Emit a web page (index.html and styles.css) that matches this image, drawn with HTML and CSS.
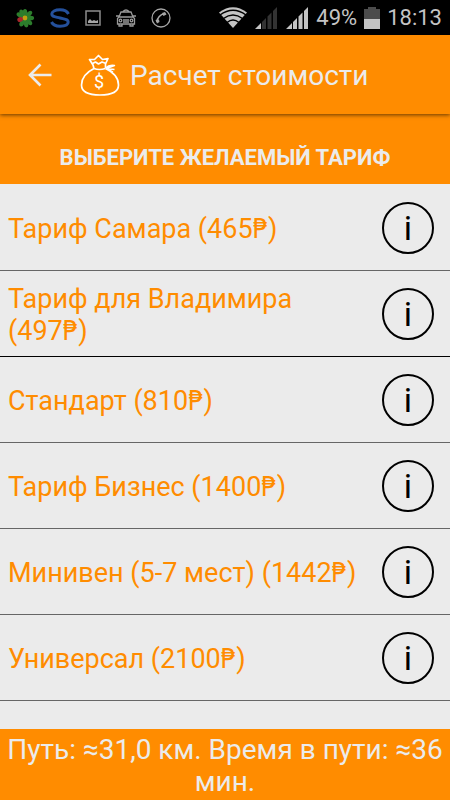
FILE: index.html
```html
<!DOCTYPE html>
<html lang="ru">
<head>
    <meta charset="UTF-8">
    <meta name="viewport" content="width=device-width, initial-scale=1.0">
    <title>Расчет стоимости</title>
    <link rel="stylesheet" href="styles.css">
</head>
<body>
    <div class="statusbar">
        <div class="notifications">
            <svg width="20" height="20" viewBox="0 0 20 20">
                <g fill="#2c7d2c">
                    <ellipse cx="10" cy="4.500" rx="2.300" ry="3.600"/>
                    <ellipse cx="10" cy="4.500" rx="2.300" ry="4" transform="rotate(45 10 10)"/>
                    <ellipse cx="10" cy="4.500" rx="2.300" ry="3.600" transform="rotate(90 10 10)"/>
                    <ellipse cx="10" cy="4.500" rx="2.300" ry="4" transform="rotate(135 10 10)"/>
                    <ellipse cx="10" cy="4.500" rx="2.300" ry="4" transform="rotate(170 10 10)"/>
                    <ellipse cx="10" cy="4.500" rx="2.300" ry="4" transform="rotate(210 10 10)"/>
                    <ellipse cx="10" cy="4.500" rx="2.300" ry="4" transform="rotate(300 10 10)"/>
                    <ellipse cx="10" cy="4.500" rx="2.300" ry="4" transform="rotate(330 10 10)"/>
                </g>
                <ellipse cx="10" cy="5" rx="2.300" ry="3" transform="rotate(252 10 10)" fill="#a8262c"/>
                <circle cx="10" cy="10" r="2.400" fill="#c0a010"/>
            </svg>
            <svg width="20" height="20" viewBox="0 0 20 20" fill="none" stroke="#24509c" stroke-width="3">
                <path d="M18.500 6C17 3 14 1.800 10 1.800C5 1.800 1.800 3.500 1.800 6C1.800 8.500 4 8.500 10 10C16 11.500 18.200 11.500 18.200 14C18.200 16.500 15 18.200 10 18.200C6 18.200 3 17 1.500 14"/>
            </svg>
            <svg width="16" height="16" viewBox="0 0 16 16" fill="none" stroke="#8c8c8c">
                <rect x="1" y="1" width="14" height="14" stroke-width="1.500"/>
                <path d="M3 13V11L5 9L7 11L9 10L11 11L13 10V13Z" fill="#a6a6a6" stroke="none"/>
            </svg>
            <svg width="20" height="18" viewBox="0 0 20 18" fill="none" stroke="#9a9a9a" stroke-width="1.300">
                <path d="M7 2.500Q10 -0.500 13 2.500M5 3H15L17 8H3ZM0 7H3M17 7H20M3 8L1.500 9.500V15H18.500V9.500L17 8M3 15V17H6V15M14 15V17H17V15M7 11H13M7 13H13"/>
                <circle cx="4.500" cy="11.500" r="1.300"/>
                <circle cx="15.500" cy="11.500" r="1.300"/>
            </svg>
            <svg width="20" height="20" viewBox="0 0 20 20" fill="none" stroke="#a6a6a6">
                <circle cx="10" cy="10" r="9" stroke-width="1.300"/>
                <path d="M13.500 5.500C9.500 6.500 6.500 9.500 5.800 14" stroke-width="1.500"/>
                <path d="M11 5L14 4L15.500 6.500L12.500 8ZM4.500 12L8 11.500L8.500 14L6 15.500Z" fill="#a6a6a6" stroke="none"/>
            </svg>
        </div>
        <div class="system">
            <svg width="28" height="22" viewBox="0 0 28 22">
                <path d="M14 21L0 5.500Q14 -5 28 5.500Z" fill="#c4c4c4"/>
                <path d="M1 8Q14 -1.500 27 8M4.500 11.500Q14 4.500 23.500 11.500M8 15.500Q14 10.500 20 15.500" fill="none" stroke="#000" stroke-width="1.500"/>
            </svg>
            <svg width="24" height="22" viewBox="0 0 24 22">
                <path d="M1 22L7 16V22Z" fill="#c4c4c4"/>
                <path d="M8 15L12 11V22H8ZM13.500 9.500L17.500 5.500V22H13.500ZM19 4L23 0V22H19Z" fill="#333"/>
            </svg>
            <svg width="24" height="22" viewBox="0 0 24 22">
                <path d="M1 22L7 16V22ZM8 15L12 11V22H8ZM13.500 9.500L17.500 5.500V22H13.500ZM19 4L23 0V22H19Z" fill="#c4c4c4"/>
            </svg>
            <span>49%</span>
            <svg width="16" height="22" viewBox="0 0 16 22">
                <path d="M0 2H4V0H12V2H16V12H0Z" fill="#4c4c4c"/>
                <path d="M0 12H16V22H0Z" fill="#c4c4c4"/>
            </svg>
            <span>18:13</span>
        </div>
    </div>

    <header class="appbar">
        <button class="back" type="button" aria-label="Назад">
            <svg width="24" height="24" viewBox="0 0 24 24" fill="none" stroke="#ebebeb" stroke-width="2.600">
                <path d="M23.500 12H3M12.500 1.500L2 12L12.500 22.500"/>
            </svg>
        </button>
        <svg class="bag" width="40" height="42" viewBox="0 0 40 42" fill="none" stroke="#fff" stroke-width="1.700" stroke-linejoin="round">
            <path d="M14 14.500L13 11L9.500 5.500L14.500 5.500L18.500 1.500L22.500 5.500L28 4.500L25.500 10V14"/>
            <path d="M12.500 9.500L15.500 8L18.500 10L22 8L26 9.500"/>
            <path d="M14 14.500Q19 16.500 25.500 14.500"/>
            <path d="M14 14.500C7 18 1.500 24 1.500 31C1.500 38 8 41 20 41C32 41 38.500 38 38.500 31C38.500 24 33 18 25.500 14.500"/>
            <path d="M25.500 14Q29 10.500 34.500 11.500L26.500 14.500L34.500 15.500M27 14.500L33 18" stroke-width="1.400"/>
            <text x="19" y="34" text-anchor="middle" class="dollar">$</text>
        </svg>
        <h1>Расчет стоимости</h1>
    </header>

    <main>
        <h2>ВЫБЕРИТЕ ЖЕЛАЕМЫЙ ТАРИФ</h2>
        <ul class="tariffs">
            <li>
                <a href="#samara">Тариф Самара (465<span class="cur">₱</span>)</a>
                <button class="info" type="button" aria-label="Информация">i</button>
            </li>
            <li>
                <a href="#vladimir">Тариф для Владимира (497<span class="cur">₱</span>)</a>
                <button class="info" type="button" aria-label="Информация">i</button>
            </li>
            <li>
                <a href="#standard">Стандарт (810<span class="cur">₱</span>)</a>
                <button class="info" type="button" aria-label="Информация">i</button>
            </li>
            <li>
                <a href="#business">Тариф Бизнес (1400<span class="cur">₱</span>)</a>
                <button class="info" type="button" aria-label="Информация">i</button>
            </li>
            <li>
                <a href="#minivan">Минивен (5-7 мест) (1442<span class="cur">₱</span>)</a>
                <button class="info" type="button" aria-label="Информация">i</button>
            </li>
            <li>
                <a href="#universal">Универсал (2100<span class="cur">₱</span>)</a>
                <button class="info" type="button" aria-label="Информация">i</button>
            </li>
        </ul>
    </main>

    <footer>Путь: ≈31,0 км. Время в пути: ≈36 мин.</footer>
</body>
</html>
```
FILE: styles.css
```css
* {
    box-sizing: border-box;
}

body {
    font-family: Roboto, "Liberation Sans", sans-serif;
    background-color: #ebebeb;
    color: #ebebeb;
    margin: 0;
    min-height: 100vh;
    display: flex;
    flex-direction: column;
}

svg {
    display: block;
    flex: none;
}

.statusbar {
    display: flex;
    justify-content: space-between;
    align-items: center;
    height: 35px;
    padding: 0 8px 0 15px;
    background-color: #000;
    color: #c4c4c4;
    font-size: 22px;
}

.notifications {
    display: flex;
    align-items: center;
    gap: 15px;
}

.system {
    display: flex;
    align-items: center;
    gap: 7px;
}

.appbar {
    display: flex;
    align-items: center;
    height: 79px;
    padding: 0 24px;
    background-color: #ff8c00;
    box-shadow: 0 1px 4px rgba(0, 0, 0, 0.6);
    position: relative;
}

.back {
    padding: 0;
    border: none;
    background: none;
    margin: 0 28px 0 4px;
    cursor: pointer;
}

.bag {
    margin-right: 10px;
}

.dollar {
    font-size: 18px;
    fill: #fff;
    stroke: none;
}

h1 {
    font-size: 28px;
    font-weight: 400;
    line-height: 32px;
    margin: 0;
    padding-top: 2px;
}

main {
    flex: 1;
}

h2 {
    margin: 0;
    padding: 32px 8px 14px;
    background-color: #ff8c00;
    font-size: 22px;
    font-weight: 700;
    line-height: 24px;
    text-align: center;
}

.tariffs {
    list-style: none;
    margin: 0;
    padding: 1px 0 0;
}

.tariffs li {
    display: flex;
    align-items: center;
    justify-content: space-between;
    gap: 16px;
    min-height: 86px;
    padding: 0 16px 0 8px;
    border-bottom: 1px solid #666;
}

.tariffs li:nth-child(2) {
    border-bottom-color: #000;
}

.tariffs a {
    padding-top: 2px;
    color: #ff8c00;
    font-size: 27px;
    line-height: 32px;
    text-decoration: none;
}

/* the peso sign is too wide in Roboto */
.cur {
    font-family: "DejaVu Sans Condensed", "DejaVu Sans", sans-serif;
    line-height: 1;
}

.info {
    flex: none;
    width: 52px;
    height: 52px;
    padding: 0;
    border: 2px solid #000;
    border-radius: 50%;
    background: none;
    color: #000;
    font-family: inherit;
    font-size: 34px;
    line-height: 48px;
    cursor: pointer;
}

footer {
    padding: 5px 4px 2px;
    background-color: #ff8c00;
    font-size: 28px;
    line-height: 32px;
    text-align: center;
}
```
